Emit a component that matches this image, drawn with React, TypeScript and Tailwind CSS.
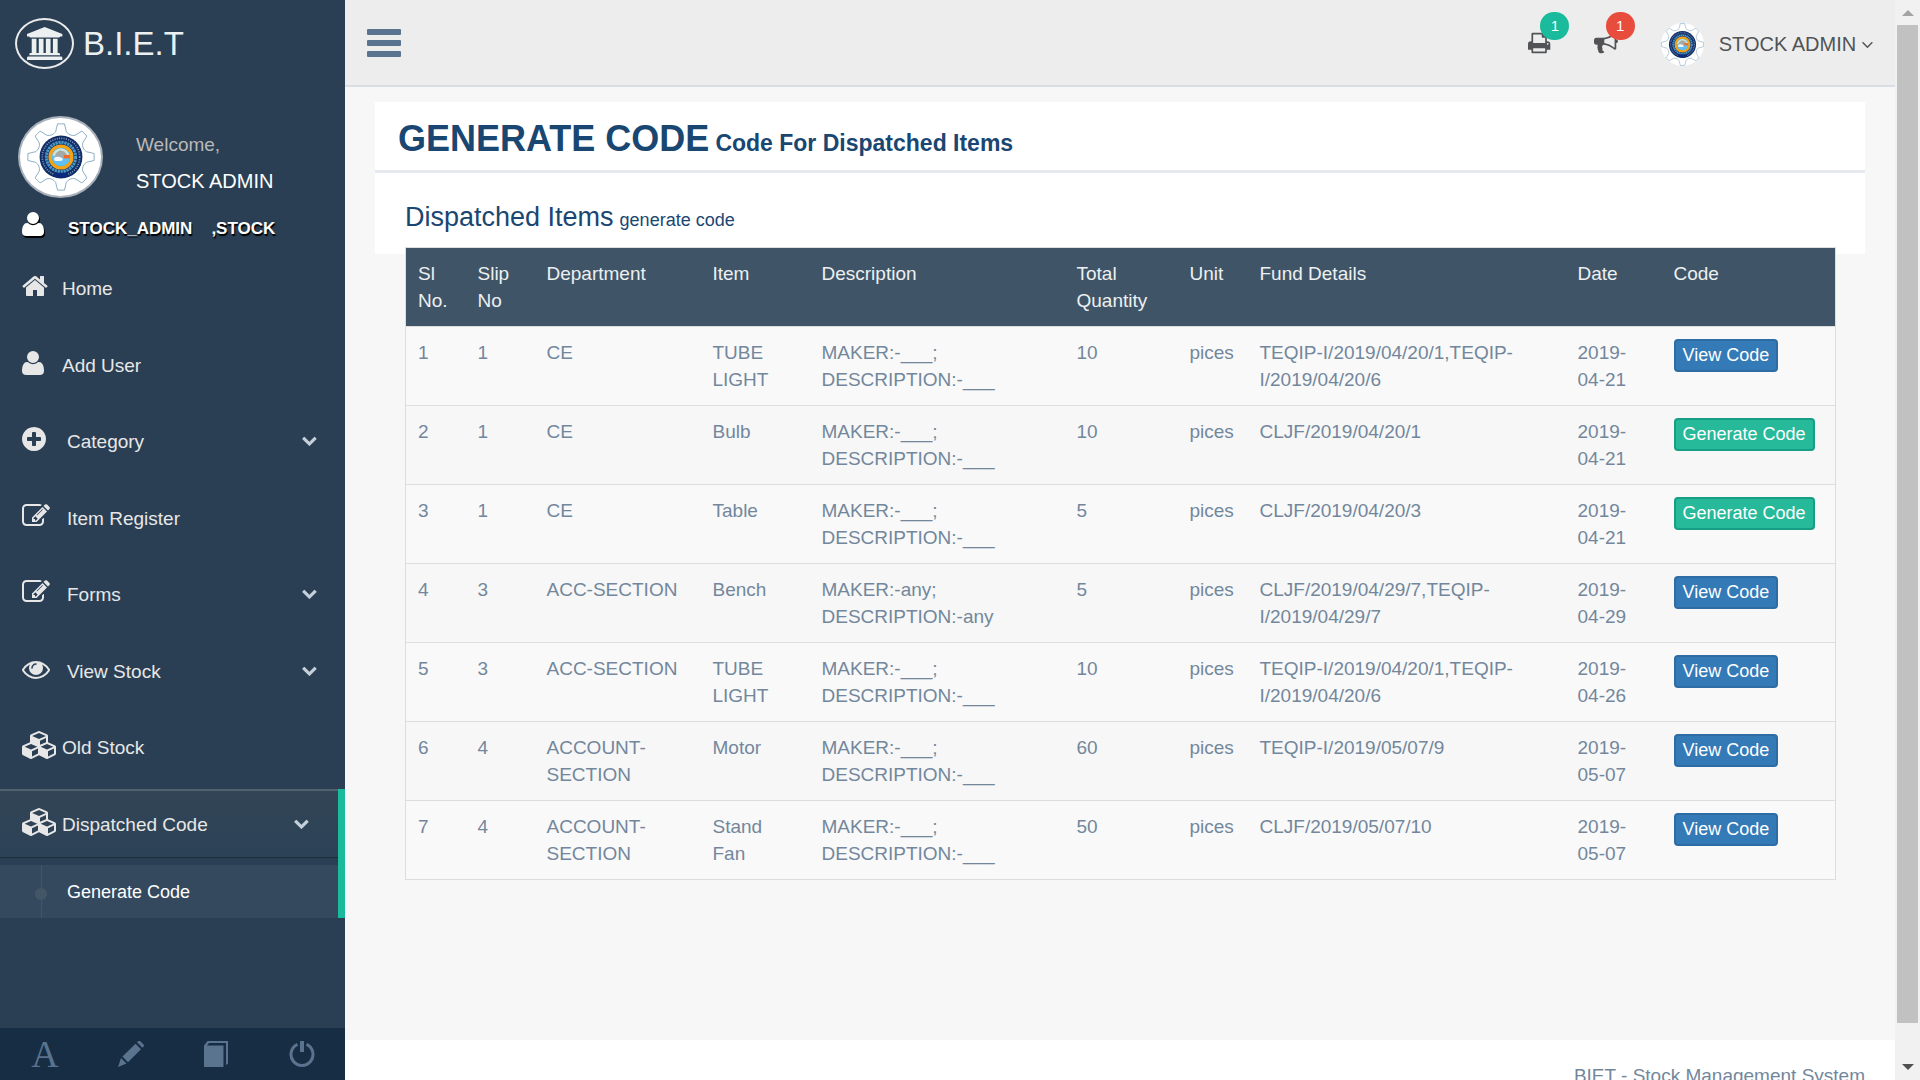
import React from 'react';

type IconShape = { x: number; w: number; d: string };

const ICONS: Record<string, IconShape> = {
  home: {
    x: 64, w: 1664,
    d: 'M1472 992v480q0 26-19 45t-45 19h-384v-384h-256v384h-384q-26 0-45-19t-19-45v-480q0-1 .5-3t.5-3l575-474 575 474q1 2 1 6zm223-69l-62 74q-8 9-21 11h-3q-13 0-21-7l-692-577-692 577q-12 8-24 7-13-2-21-11l-62-74q-8-10-7-23.5t11-21.5l719-599q32-26 76-26t76 26l244 204v-195q0-14 9-23t23-9h192q14 0 23 9t9 23v408l219 182q10 8 11 21.5t-7 23.5z',
  },
  user: {
    x: 192, w: 1408,
    d: 'M1600 1405q0 120-73 189.5t-194 69.5h-874q-121 0-194-69.5t-73-189.5q0-53 3.5-103.5t14-109 26.5-108.5 43-97.5 62-81 85.5-53.5 111.5-20q9 0 42 21.5t74.5 48 108 48 133.5 21.5 133.5-21.5 108-48 74.5-48 42-21.5q61 0 111.5 20t85.5 53.5 62 81 43 97.5 26.5 108.5 14 109 3.5 103.5zm-320-893q0 159-112.5 271.5t-271.5 112.5-271.5-112.5-112.5-271.5 112.5-271.5 271.5-112.5 271.5 112.5 112.5 271.5z',
  },
  plus: {
    x: 128, w: 1536,
    d: 'M1344 960v-128q0-26-19-45t-45-19h-256v-256q0-26-19-45t-45-19h-128q-26 0-45 19t-19 45v256h-256q-26 0-45 19t-19 45v128q0 26 19 45t45 19h256v256q0 26 19 45t45 19h128q26 0 45-19t19-45v-256h256q26 0 45-19t19-45zm320-64q0 209-103 385.5t-279.5 279.5-385.5 103-385.5-103-279.5-279.5-103-385.5 103-385.5 279.5-279.5 385.5-103 385.5 103 279.5 279.5 103 385.5z',
  },
  edit: {
    x: 0, w: 1792,
    d: 'M888 1184l116-116-152-152-116 116v56h96v96h56zm440-720q-16-16-33 1l-350 350q-17 17-1 33t33-1l350-350q17-17 1-33zm80 594v190q0 119-84.5 203.5t-203.5 84.5h-832q-119 0-203.5-84.5t-84.5-203.5v-832q0-119 84.5-203.5t203.5-84.5h832q63 0 117 25 15 7 18 23 3 17-9 29l-49 49q-14 14-32 8-23-6-45-6h-832q-66 0-113 47t-47 113v832q0 66 47 113t113 47h832q66 0 113-47t47-113v-126q0-13 9-22l64-64q15-15 35-7t20 29zm-96-738l288 288-672 672h-288v-288zm444 132l-92 92-288-288 92-92q28-28 68-28t68 28l152 152q28 28 28 68t-28 68z',
  },
  eye: {
    x: 0, w: 1792,
    d: 'M1664 960q-152-236-381-353 61 104 61 225 0 185-131.5 316.5t-316.5 131.5-316.5-131.5-131.5-316.5q0-121 61-225-229 117-381 353 133 205 333.5 326.5t434.5 121.5 434.5-121.5 333.5-326.5zm-720-384q0-20-14-34t-34-14q-125 0-214.5 89.5t-89.5 214.5q0 20 14 34t34 14 34-14 14-34q0-86 61-147t147-61q20 0 34-14t14-34zm848 384q0 34-20 69-140 230-376.5 368.5t-499.5 138.5-499.5-139-376.5-368q-20-35-20-69t20-69q140-229 376.5-368t499.5-139 499.5 139 376.5 368q20 35 20 69z',
  },
  cubes: {
    x: 0, w: 2304,
    d: 'M640 1632l384-192v-314l-384 164v342zm-64-454l404-173-404-173-404 173zm1088 454l384-192v-314l-384 164v342zm-64-454l404-173-404-173-404 173zm-448-293l384-165v-266l-384 164v267zm-64-379l441-189-441-189-441 189zm1088 518v416q0 36-19 67t-52 47l-448 224q-25 14-57 14t-57-14l-448-224q-4-2-7-4-2 2-7 4l-448 224q-25 14-57 14t-57-14l-448-224q-33-16-52-47t-19-67v-416q0-38 21.5-70t56.5-48l434-186v-400q0-38 21.5-70t56.5-48l448-192q23-10 50-10t50 10l448 192q35 16 56.5 48t21.5 70v400l434 186q36 16 57 48t21 70z',
  },
  chevron: {
    x: 64, w: 1664,
    d: 'M1683 808l-742 741q-19 19-45 19t-45-19l-742-741q-19-19-19-45.5t19-45.5l166-165q19-19 45-19t45 19l531 531 531-531q19-19 45-19t45 19l166 165q19 19 19 45.5t-19 45.5z',
  },
  angle: {
    x: 384, w: 1024,
    d: 'M1395 736q0 13-10 23l-466 466q-10 10-23 10t-23-10l-466-466q-10-10-10-23t10-23l50-50q10-10 23-10t23 10l393 393 393-393q10-10 23-10t23 10l50 50q10 10 10 23z',
  },
  print: {
    x: 64, w: 1664,
    d: 'M448 1536h896v-256h-896v256zm0-640h896v-384h-160q-40 0-68-28t-28-68v-160h-640v640zm1152 64q0-26-19-45t-45-19-45 19-19 45 19 45 45 19 45-19 19-45zm128 0v416q0 13-9.5 22.5t-22.5 9.5h-224v160q0 40-28 68t-68 28h-960q-40 0-68-28t-28-68v-160h-224q-13 0-22.5-9.5t-9.5-22.5v-416q0-79 56.5-135.5t135.5-56.5h64v-544q0-40 28-68t68-28h672q40 0 88 20t76 48l152 152q28 28 48 76t20 88v256h64q79 0 135.5 56.5t56.5 135.5z',
  },
  bullhorn: {
    x: 0, w: 1792,
    d: 'M1664 640q53 0 90.5 37.5t37.5 90.5-37.5 90.5-90.5 37.5v384q0 52-38 90t-90 38q-417-347-812-380-58 19-91 66t-31 100.5 40 92.5q-20 33-23 65.5t6 58 33.5 55 48 50 61.5 50.5q-29 58-111.5 83t-168.5 11.5-132-55.5q-7-23-29.5-87.5t-32-94.5-23-89-15-101 3.5-98.5 22-110.5h-122q-66 0-113-47t-47-113v-192q0-66 47-113t113-47h480q435 0 896-384 52 0 90 38t38 90v384zm-128 604v-954q-394 302-768 343v270q377 42 768 341z',
  },
  bank: {
    x: 0, w: 1920,
    d: 'M960 0l960 384v128h-128q0 26-20.5 45t-48.5 19h-1526q-28 0-48.5-19t-20.5-45h-128v-128zm-704 640h256v768h128v-768h256v768h128v-768h256v768h128v-768h256v768h59q28 0 48.5 19t20.5 45v64h-1664v-64q0-26 20.5-45t48.5-19h59v-768zm1595 960q28 0 48.5 19t20.5 45v128h-1920v-128q0-26 20.5-45t48.5-19h1782z',
  },
};

function Icon({ name, size, className = '' }: { name: string; size: number; className?: string }) {
  const s = ICONS[name];
  return (
    <svg
      aria-hidden="true"
      className={`shrink-0 overflow-visible fill-current ${className}`}
      viewBox={`${s.x} 0 ${s.w} 1792`}
      width={(size * s.w) / 1792}
      height={size}
    >
      <path d={s.d} />
    </svg>
  );
}

function gearPath() {
  const point = (r: number, deg: number) => {
    const a = (deg * Math.PI) / 180;
    return `${(50 + r * Math.sin(a)).toFixed(1)} ${(50 - r * Math.cos(a)).toFixed(1)}`;
  };
  let d = '';
  for (let i = 0; i < 8; i++) {
    const a = i * 45;
    d += `${i === 0 ? 'M' : 'L'}${point(38, a - 12)}L${point(49, a - 6)}L${point(49, a + 6)}L${point(38, a + 12)}Q${point(33, a + 22.5)} ${point(38, a + 33)}`;
  }
  return d + 'Z';
}

function Emblem({ className }: { className: string }) {
  return (
    <svg className={className} viewBox="0 0 100 100" role="img" aria-label="Institute emblem">
      <path d={gearPath()} fill="#fff" stroke="#7fa6bd" strokeWidth="1.3" strokeLinejoin="round" />
      <circle cx="50" cy="50" r="31.5" fill="#0f2c66" />
      <circle cx="50" cy="50" r="27.5" fill="none" stroke="#7d96b8" strokeWidth="2.5" strokeDasharray="1.6 1.8" />
      <circle cx="50" cy="50" r="21.5" fill="none" stroke="#4a97c4" strokeWidth="4.500" strokeDasharray="3.4 1" />
      <path d="M41 73h18l3 5a31 31 0 0 1-24 0z" fill="#0b2a7a" />
      <circle cx="50" cy="50" r="16" fill="#4db4e8" stroke="#f5a316" strokeWidth="5" />
      <circle cx="50" cy="50" r="13" fill="#62bff0" />
      <path d="M37.500 48q2-10 12.500-11 10 1 12.500 11z" fill="#cfe6d8" />
      <path d="M42 45l6-5 7 2 5 6-10 3-9-1z" fill="#a5aaa8" />
      <path d="M40 51q5-3 11 0 3 2 1 4-6 2-12 0z" fill="#f4f7f8" />
      <path d="M54 47h9v5h-9z" fill="#ee6b2d" />
    </svg>
  );
}

const MENU = [
  { label: 'Home', icon: 'home' },
  { label: 'Add User', icon: 'user' },
  { label: 'Category', icon: 'plus', wide: true, sub: true },
  { label: 'Item Register', icon: 'edit', wide: true },
  { label: 'Forms', icon: 'edit', wide: true, sub: true },
  { label: 'View Stock', icon: 'eye', wide: true, sub: true },
  { label: 'Old Stock', icon: 'cubes' },
];

function MenuLink({ label, icon, wide, sub, active }: { label: string; icon: string; wide?: boolean; sub?: boolean; active?: boolean }) {
  return (
    <a
      href="#"
      className={`flex h-[68px] items-start pl-[22px] pt-[19px] text-[#e7e7e7] ${
        active
          ? 'bg-linear-to-b from-[#334556] to-[#2c4257] pr-[29px] shadow-[0_1px_0_rgba(0,0,0,0.25),inset_0_2px_0_rgba(255,255,255,0.16)]'
          : 'pr-[28px]'
      }`}
    >
      <span className={`flex shrink-0 ${wide ? 'w-[45px]' : 'w-10'}`}>
        <Icon name={icon} size={28} />
      </span>
      <span className="mt-[3px] flex-1 whitespace-nowrap">{label}</span>
      {sub && <Icon name="chevron" size={16} className="mt-[7px] text-[#c4cfda]" />}
    </a>
  );
}

function Sidebar() {
  return (
    <aside className="flex w-[345px] shrink-0 flex-col bg-[#2a3f54]">
      <a href="#" className="flex h-[86px] shrink-0 items-center gap-[9px] pl-[15px] text-[33px] text-[#ecf0f1]">
        <span className="flex h-[51px] w-[59px] items-center justify-center rounded-[50%] border-2 border-[#eaeaea]">
          <Icon name="bank" size={33} />
        </span>
        B.I.E.T
      </a>
      <div className="mt-[30px] flex h-[94px] shrink-0 pl-[18px]">
        <div className="flex h-[82px] w-[85px] items-center justify-center rounded-[50%] border-2 border-[#a7afb9] bg-white">
          <Emblem className="size-[68px]" />
        </div>
        <div className="ml-[33px] flex flex-col gap-[10px] pt-[15px]">
          <span className="text-[#bab8b8]">Welcome,</span>
          <h2 className="text-[20px] leading-[27px] text-white">STOCK ADMIN</h2>
        </div>
      </div>
      <h3 className="mb-[15px] flex h-7 shrink-0 items-start pl-[22px] text-[17px] font-bold text-white [text-shadow:1px_2px_1px_#000]">
        <Icon name="user" size={28} className="[filter:drop-shadow(1px_2px_0_#000)]" />
        <span className="ml-6 mt-[5px]">STOCK_ADMIN</span>
        <span className="ml-[19px] mt-[5px]">,STOCK</span>
      </h3>
      <nav className="flex-1">
        <ul>
          {MENU.map((m) => (
            <li key={m.label} className="odd:mb-[9px] even:mb-2">
              <MenuLink {...m} />
            </li>
          ))}
          <li className="border-r-[7px] border-[#1abb9c]">
            <MenuLink label="Dispatched Code" icon="cubes" sub active />
            <ul className="pt-2">
              <li className="relative bg-[#34495e] before:absolute before:inset-y-0 before:left-[41px] before:w-px before:bg-[#425668] after:absolute after:left-[35px] after:top-[23px] after:size-3 after:rounded-full after:bg-[#425668]">
                <a href="#" className="block pl-[67px] pt-px text-[18px] leading-[52px] text-white">
                  Generate Code
                </a>
              </li>
            </ul>
          </li>
        </ul>
      </nav>
      <div className="grid h-[52px] shrink-0 grid-cols-4 place-items-center pl-[2px] bg-[#172d44] text-[#5a738e]">
        <button aria-label="Font" className="font-['Liberation_Serif',serif] text-[38px] leading-[52px]">A</button>
        <button aria-label="Edit">
          <svg className="size-[26px] fill-current" viewBox="0 0 26 26">
            <path d="M0 26l3-9 5.500 5.500zM4.500 15.500L17.500 2.800l5.500 5.500L10 21.300zM19 1.300L20.300 0q1-.6 2 .3l3.200 3.200q.9 1 .1 2L24.500 6.800z" />
          </svg>
        </button>
        <button aria-label="Book">
          <svg className="size-[26px] fill-current" viewBox="0 0 26 26">
            <path fillRule="evenodd" d="M4.500 0H25v22.500l-2 1.500V2H6L4 4.500h16.500V26H1V4.500z" />
          </svg>
        </button>
        <button aria-label="Logout">
          <svg className="size-[26px]" viewBox="0 0 26 26" fill="none" stroke="currentColor">
            <path d="M8.500 3.400a11 11 0 1 0 9 0" strokeWidth="3" />
            <path d="M13 0v11" strokeWidth="4" />
          </svg>
        </button>
      </div>
    </aside>
  );
}

function TopBar() {
  return (
    <header className="flex h-[87px] shrink-0 items-center justify-between border-b-2 border-[#d9dee4] bg-[#ededed] pl-[22px] pr-[22px] text-[#515356]">
      <button aria-label="Toggle menu" className="flex w-[34px] flex-col gap-[5px]">
        <span className="h-[6px] rounded-[1px] bg-[#5a738e]" />
        <span className="h-[6px] rounded-[1px] bg-[#5a738e]" />
        <span className="h-[6px] rounded-[1px] bg-[#5a738e]" />
      </button>
      <div className="flex items-center">
        <button aria-label="Print requests" className="relative mr-[43px]">
          <Icon name="print" size={24} />
          <span className="absolute -top-[19px] left-3 flex h-7 w-[29px] items-center justify-center rounded-full bg-[#1abb9c] text-[15px] text-white">1</span>
        </button>
        <button aria-label="Announcements" className="relative mr-[43px]">
          <Icon name="bullhorn" size={24} />
          <span className="absolute -top-[19px] left-3 flex h-7 w-[29px] items-center justify-center rounded-full bg-[#e74c3c] text-[15px] text-white">1</span>
        </button>
        <button className="flex items-center pt-[3px] text-[20px]">
          <span className="mr-[15px] flex size-[43px] rounded-full bg-white">
            <Emblem className="size-[43px]" />
          </span>
          STOCK ADMIN
          <Icon name="angle" size={19} className="ml-[6px]" />
        </button>
      </div>
    </header>
  );
}

const NONE = 'MAKER:-___; DESCRIPTION:-___';
const ROWS = [
  ['1', '1', 'CE', 'TUBE LIGHT', NONE, '10', 'pices', 'TEQIP-I/2019/04/20/1,TEQIP-I/2019/04/20/6', '2019-04-21', 'view'],
  ['2', '1', 'CE', 'Bulb', NONE, '10', 'pices', 'CLJF/2019/04/20/1', '2019-04-21', 'generate'],
  ['3', '1', 'CE', 'Table', NONE, '5', 'pices', 'CLJF/2019/04/20/3', '2019-04-21', 'generate'],
  ['4', '3', 'ACC-SECTION', 'Bench', 'MAKER:-any; DESCRIPTION:-any', '5', 'pices', 'CLJF/2019/04/29/7,TEQIP-I/2019/04/29/7', '2019-04-29', 'view'],
  ['5', '3', 'ACC-SECTION', 'TUBE LIGHT', NONE, '10', 'pices', 'TEQIP-I/2019/04/20/1,TEQIP-I/2019/04/20/6', '2019-04-26', 'view'],
  ['6', '4', 'ACCOUNT-SECTION', 'Motor', NONE, '60', 'pices', 'TEQIP-I/2019/05/07/9', '2019-05-07', 'view'],
  ['7', '4', 'ACCOUNT-SECTION', 'Stand Fan', NONE, '50', 'pices', 'CLJF/2019/05/07/10', '2019-05-07', 'view'],
];
const HEADS = ['Sl No.', 'Slip No', 'Department', 'Item', 'Description', 'Total Quantity', 'Unit', 'Fund Details', 'Date', 'Code'];

function ItemsTable() {
  return (
    <table className="w-full table-fixed border-collapse border border-[#ddd] text-left">
      <colgroup>
        <col className="w-[60px]" />
        <col className="w-[69px]" />
        <col className="w-[166px]" />
        <col className="w-[109px]" />
        <col className="w-[255px]" />
        <col className="w-[113px]" />
        <col className="w-[70px]" />
        <col className="w-[318px]" />
        <col className="w-[96px]" />
        <col className="w-[174px]" />
      </colgroup>
      <thead>
        <tr className="bg-[#405467] text-[#ecf0f1]">
          {HEADS.map((h) => (
            <th key={h} scope="col" className="p-3 align-top font-normal">{h}</th>
          ))}
        </tr>
      </thead>
      <tbody>
        {ROWS.map((r) => (
          <tr key={r[0]} className="border-t border-[#ddd] odd:bg-[#f9f9f9]">
            {r.slice(0, 9).map((c, i) => (
              <td key={i} className={i === 6 ? 'py-3 pl-3 align-top' : 'p-3 align-top'}>{c}</td>
            ))}
            <td className="p-3 align-top">
              {r[9] === 'view' ? (
                <button className="block rounded-[4px] border-2 border-[#2e6da4] bg-[#337ab7] px-[7px] py-px text-[18px] text-white">View Code</button>
              ) : (
                <button className="block rounded-[4px] border-2 border-[#169f85] bg-[#26b99a] px-[7px] py-px text-[18px] text-white">Generate Code</button>
              )}
            </td>
          </tr>
        ))}
      </tbody>
    </table>
  );
}

function ScrollTrack() {
  return (
    <div aria-hidden="true" className="flex w-[25px] shrink-0 flex-col items-center bg-[#f1f1f1]">
      <svg className="h-[25px] w-3 shrink-0" viewBox="0 0 12 25"><path d="M0 16l6-6 6 6z" fill="#a3a3a3" /></svg>
      <div className="w-[21px] flex-1 bg-[#c1c1c1]" />
      <svg className="mt-8 h-[25px] w-3 shrink-0" viewBox="0 0 12 25"><path d="M0 9l6 6 6-6z" fill="#505050" /></svg>
    </div>
  );
}

export default function App() {
  return (
    <div className="flex h-screen overflow-hidden bg-[#f7f7f7] font-['Liberation_Sans',Arial,sans-serif] text-[19px] leading-[27px] text-[#73879c]">
      <Sidebar />
      <div className="flex min-w-0 flex-1 flex-col">
        <TopBar />
        <main className="min-h-[953px] shrink-0 px-[30px] pt-[15px]">
          <div className="border-b-[3px] border-[#e6e9ed] bg-white pb-[11px] pl-[23px] pt-[17px]">
            <h1 className="text-[36px] font-bold leading-10 text-[#1a4672]">
              GENERATE CODE<small className="ml-[6px] text-[23px] leading-none">Code For Dispatched Items</small>
            </h1>
          </div>
          <section>
            <div className="bg-white pb-[19px] pl-[30px] pt-[26px]">
              <h2 className="text-[27px] leading-9 text-[#1a4672]">
                Dispatched Items<small className="ml-[6px] text-[18px] leading-none">generate code</small>
              </h2>
            </div>
            <div className="relative -mt-[7px] px-[30px]">
              <ItemsTable />
            </div>
          </section>
        </main>
        <footer className="shrink-0 bg-white px-[30px] py-[22px] text-right">BIET - Stock Management System</footer>
      </div>
      <ScrollTrack />
    </div>
  );
}
